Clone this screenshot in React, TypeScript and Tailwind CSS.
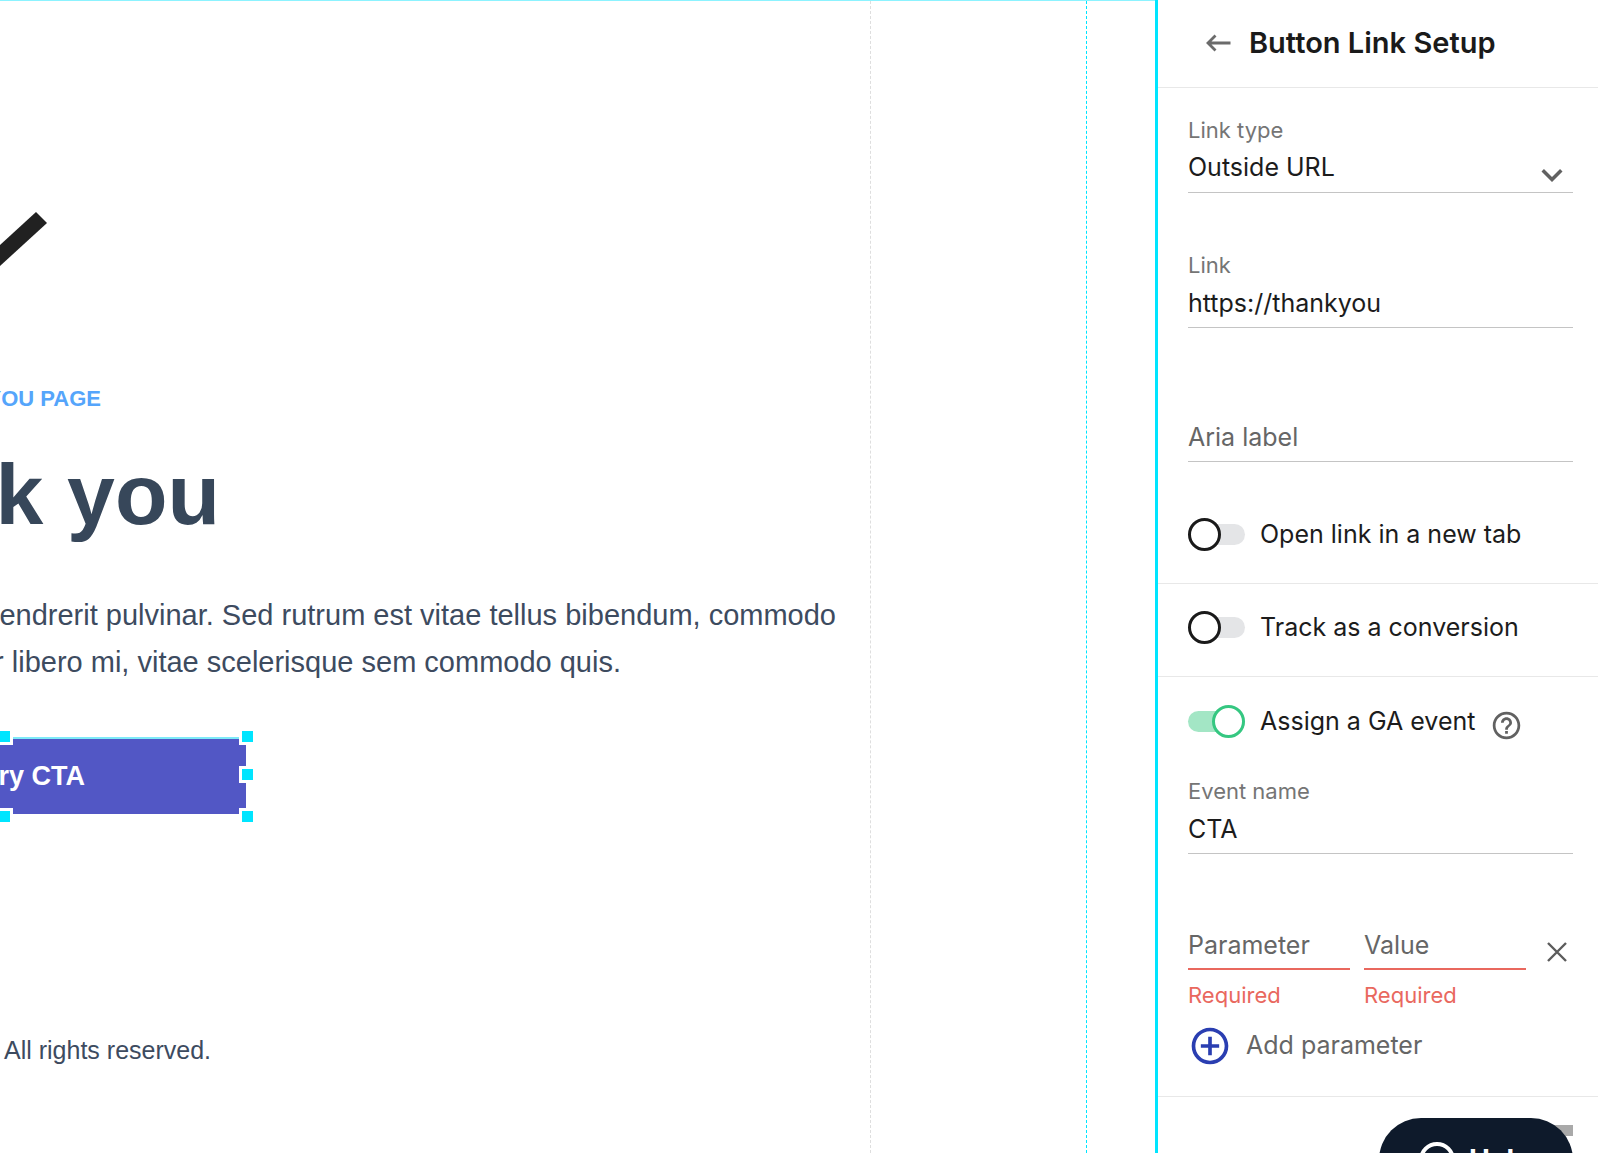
import { useState } from 'react';
import { MdAddCircleOutline, MdExpandMore, MdHelpOutline } from 'react-icons/md';

const handles = [
  '-left-1 -top-[11px]',
  '-right-[10px] -top-[11px]',
  '-right-[10px] top-[27px]',
  '-left-1 -bottom-[11px]',
  '-right-[10px] -bottom-[11px]'
];

const fieldLine = 'block h-[49px] w-full appearance-none border-b border-[#c4c4c4] bg-transparent text-[25px] text-[#1c1c1c] outline-none';

function TextField({ id, label, value }: { id: string; label: string; value: string }) {
  return (
    <div>
      <label htmlFor={id} className="block text-[22px] leading-7 text-[#757575]">
        {label}
      </label>
      <input id={id} type="text" defaultValue={value} className={`pb-px ${fieldLine}`} />
    </div>
  );
}

function Toggle({ id, label, on = false }: { id: string; label: string; on?: boolean }) {
  const [checked, setChecked] = useState(on);

  return (
    <div className="flex items-center gap-[15px]">
      <input
        id={id}
        type="checkbox"
        checked={checked}
        onChange={() => setChecked(!checked)}
        className="relative h-[33px] w-[57px] shrink-0 appearance-none before:absolute before:inset-x-0 before:top-[6px] before:h-[21px] before:rounded-full before:bg-[#e4e5e7] after:absolute after:left-0 after:top-0 after:h-[33px] after:w-[33px] after:rounded-full after:border-[3px] after:border-[#1a1a1a] after:bg-white checked:before:bg-[#a3e6c5] checked:after:left-6 checked:after:border-[#35c781]"
      />
      <label htmlFor={id} className="text-[25px] leading-[33px] text-[#1c1c1c]">
        {label}
      </label>
    </div>
  );
}

function RequiredField({ label }: { label: string }) {
  return (
    <div className="min-w-0 flex-1">
      <input
        type="text"
        aria-label={label}
        placeholder={label}
        className="block h-[49px] w-full border-b-2 border-[#e9685e] bg-transparent text-[25px] outline-none placeholder:text-[#666]"
      />
      <p className="mt-[11px] text-[22px] leading-7 text-[#e9685e]">Required</p>
    </div>
  );
}

function Canvas() {
  return (
    <main className="min-w-0 flex-1 overflow-hidden border-t border-[#8cf3ff] bg-white pr-[68px] font-['Liberation_Sans',Arial,sans-serif] text-[#3d4b5f]">
      <div className="h-full border-r border-dashed border-[#00e5ff] pr-[215px]">
        <div className="h-full border-r border-dashed border-[#dedede] pt-[211px]">
          <svg width="47" height="54" viewBox="0 0 47 54" className="block">
            <polygon points="0,33 36,0 47,11 0,54" fill="#212121" />
          </svg>

          <div className="mt-[117px] flex w-[101px] justify-end whitespace-nowrap text-[22px] font-bold leading-8 text-[#55a5fb]">
            YOU PAGE
          </div>
          <h1 className="mt-[31px] flex w-[220px] justify-end whitespace-nowrap text-[86px] font-bold leading-[96px] text-[#37475a]">
            k you
          </h1>
          <div className="mt-[50px] text-[29px] leading-[47px]">
            <p className="flex w-[836px] justify-end whitespace-nowrap">
              hendrerit pulvinar. Sed rutrum est vitae tellus bibendum, commodo
            </p>
            <p className="flex w-[621px] justify-end whitespace-nowrap">
              r libero mi, vitae scelerisque sem commodo quis.
            </p>
          </div>

          <div className="relative mt-[51px] w-[246px] border-t-2 border-[#7deaf8]">
            <button type="button" className="flex h-[75px] w-full items-center bg-[#5257c5] text-[27px] font-bold text-white">
              <span className="flex w-[85px] justify-end whitespace-nowrap">ry CTA</span>
            </button>
            {handles.map((place) => (
              <span key={place} className={`absolute h-[17px] w-[17px] border-[3px] border-white bg-[#00e5ff] ${place}`} />
            ))}
          </div>

          <footer className="mt-[220px] pl-1 text-[25px] leading-8">All rights reserved.</footer>
        </div>
      </div>
    </main>
  );
}

export default function App() {
  return (
    <div className="flex h-screen overflow-hidden bg-white">
      <Canvas />

      <aside className="relative w-[443px] shrink-0 overflow-hidden border-l-[3px] border-[#00e5ff] font-['Inter',sans-serif]">
        <header className="flex h-[88px] items-center gap-[18px] border-b border-[#e8e8e8] pb-[2px] pl-12">
          <button type="button" aria-label="Back">
            <svg width="25" height="18" viewBox="0 0 25 18" fill="none" stroke="#6b6b6b" strokeWidth="2.8">
              <path d="M24.5 9H2M9.5 1.5 2 9l7.5 7.5" />
            </svg>
          </button>
          <h2 className="text-[29px] font-semibold leading-8 text-[#1a1a1a]">Button Link Setup</h2>
        </header>

        <section className="border-b border-[#e8e8e8] pb-8 pl-[30px] pr-[25px] pt-7">
          <label htmlFor="link-type" className="block text-[22px] leading-7 text-[#757575]">
            Link type
          </label>
          <div className="relative">
            <select id="link-type" className={fieldLine}>
              <option>Outside URL</option>
            </select>
            <MdExpandMore className="pointer-events-none absolute right-0 top-[10px] h-[42px] w-[42px] text-[#616161]" />
          </div>

          <div className="mt-[58px]">
            <TextField id="link" label="Link" value="https://thankyou" />
          </div>

          <input
            type="text"
            aria-label="Aria label"
            placeholder="Aria label"
            className={`mt-[85px] placeholder:text-[#666] ${fieldLine}`}
          />

          <div className="mt-14">
            <Toggle id="new-tab" label="Open link in a new tab" />
          </div>
        </section>

        <section className="border-b border-[#e8e8e8] pb-8 pl-[30px] pr-[25px] pt-[27px]">
          <Toggle id="conversion" label="Track as a conversion" />
        </section>

        <section className="border-b border-[#e8e8e8] pb-7 pl-[30px] pr-[25px] pt-7">
          <div className="flex items-start gap-[15px]">
            <Toggle id="ga-event" label="Assign a GA event" on />
            <button type="button" aria-label="Help" className="mt-1">
              <MdHelpOutline className="h-[33px] w-[33px] text-[#616161]" />
            </button>
          </div>

          <div className="mt-[35px]">
            <TextField id="event-name" label="Event name" value="CTA" />
          </div>

          <div className="mt-[67px] flex items-start gap-[14px]">
            <RequiredField label="Parameter" />
            <RequiredField label="Value" />
            <button type="button" aria-label="Remove parameter" className="mt-[21px] flex w-[33px] justify-center">
              <svg width="20" height="20" viewBox="0 0 20 20" fill="none" stroke="#5c5c5c" strokeWidth="2.4">
                <path d="m1 1 18 18M19 1 1 19" />
              </svg>
            </button>
          </div>

          <button type="button" className="mt-[15px] flex items-center gap-[14px] text-[25px] text-[#666]">
            <MdAddCircleOutline className="h-11 w-11 text-[#2a3eb1]" />
            Add parameter
          </button>
        </section>

        <div className="mr-[25px] mt-7 ml-auto h-[11px] w-10 bg-[#a9a9a9]" />

        <button
          type="button"
          className="absolute -bottom-[49px] right-[25px] flex h-[84px] w-[194px] items-center gap-[14px] rounded-full bg-[#0e1a2b] pl-10 text-[28px] font-bold text-white"
        >
          <svg width="36" height="36" viewBox="0 0 36 36" fill="none" stroke="#fff" strokeWidth="4">
            <circle cx="18" cy="18" r="16" />
          </svg>
          Help
        </button>
      </aside>
    </div>
  );
}
